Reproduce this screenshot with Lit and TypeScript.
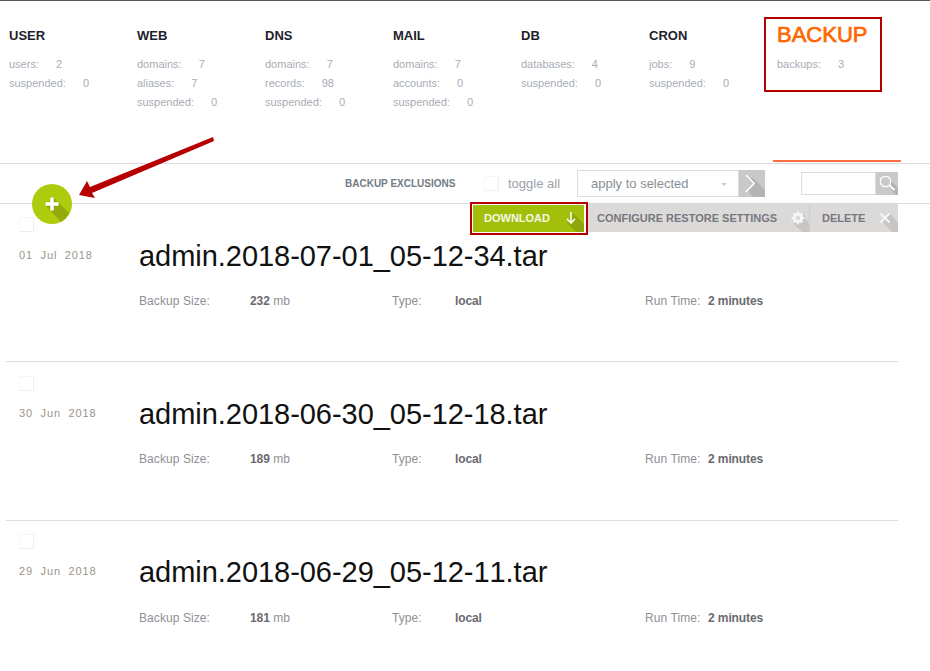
import { LitElement, html, css } from "lit";
import { customElement } from "lit/decorators.js";

const tabs = [
  { t: "USER", r: [["users", "2"], ["suspended", "0"]] },
  { t: "WEB", r: [["domains", "7"], ["aliases", "7"], ["suspended", "0"]] },
  { t: "DNS", r: [["domains", "7"], ["records", "98"], ["suspended", "0"]] },
  { t: "MAIL", r: [["domains", "7"], ["accounts", "0"], ["suspended", "0"]] },
  { t: "DB", r: [["databases", "4"], ["suspended", "0"]] },
  { t: "CRON", r: [["jobs", "9"], ["suspended", "0"]] },
  { t: "BACKUP", r: [["backups", "3"]], active: true },
];
const rows = [
  { d: "01", m: "Jul", y: "2018", name: "admin.2018-07-01_05-12-34.tar", size: "232", actions: true },
  { d: "30", m: "Jun", y: "2018", name: "admin.2018-06-30_05-12-18.tar", size: "189" },
  { d: "29", m: "Jun", y: "2018", name: "admin.2018-06-29_05-12-11.tar", size: "181" },
];

@customElement("app-root")
export class AppRoot extends LitElement {
  static styles = css`
    :host { display: block; width: 930px; height: 671px; overflow: hidden; position: relative; background: #fff; font-family: "Liberation Sans", Arial, sans-serif; color: #555; }
    * { box-sizing: border-box; }
    .nav { height: 164px; border-top: 1px solid #555; border-bottom: 1px solid #ddd; display: flex; padding-left: 9px; }
    .tab { width: 128px; height: 162px; padding-top: 27px; flex: none; }
    .tab h3 { margin: 0 0 11px; font-size: 13px; line-height: 16px; font-weight: 700; color: #1e1e2c; height: 16px; }
    .tab.active h3 { font-size: 22px; color: #ff6600; font-weight: 400; -webkit-text-stroke: 0.7px #ff6600; margin: -1px 0 12px; }
    .stat { font-size: 11px; line-height: 19px; color: #a8adb5; white-space: nowrap; }
    .stat span { margin-left: 17px; }
    .tabline { position: absolute; left: 773px; top: 160px; width: 128px; height: 2px; background: #ff6e42; }
    .toolbar { height: 40px; border-bottom: 1px solid #ddd; display: flex; align-items: center; padding-left: 345px; }
    .excl { font-size: 10px; font-weight: 700; color: #727c87; width: 139px; }
    .cb { width: 15px; height: 15px; border: 1px solid #eee; border-left-color: #f9f9f9; border-top-color: #f5f5f5; border-radius: 1px; flex: none; }
    .toggle { font-size: 13px; color: #9aa0a8; margin-left: 9px; width: 69px; }
    .select { width: 162px; height: 27px; border: 1px solid #ddd; display: flex; align-items: center; padding-left: 13px; font-size: 13px; color: #8a8f96; position: relative; }
    .select i { position: absolute; right: 11px; top: 12px; border: 3px solid transparent; border-top: 3px solid #ccc; }
    .go { width: 26px; height: 27px; background: #c9c9c9; flex: none; display: block; }
    .search { margin-left: 36px; width: 75px; height: 23px; border: 1px solid #ddd; }
    .sbtn { width: 22px; height: 23px; background: #c9c9c9; display: block; flex: none; }
    .row { height: 158px; border-bottom: 1px solid #ddd; margin-left: 6px; padding-left: 13px; width: 892px; }
    .row.r2 { height: 159px; }
    .row.r3 { border-bottom: none; margin-top: -1px; }
    .top { display: flex; height: 29px; align-items: flex-start; }
    .top .cb { margin-top: 14px; }
    .r1 .top .cb { margin-top: 13px; }
    .actions { display: flex; margin-left: auto; height: 29px; margin-top: -1px; }
    .btn { display: flex; align-items: center; height: 29px; font-size: 11px; font-weight: 700; color: #77777f; background: #dcdad8; position: relative; white-space: nowrap; overflow: hidden; }
    .btn svg { position: absolute; right: 0; top: 0; }
    .btn.dl { background: #a2bf0c; color: #f6f8e6; width: 111px; height: 27px; margin: 2px 4px 0 0; padding: 0 0 2px 11px; }
    .btn.cfg { width: 222px; padding-left: 9px; border-right: 1px solid #cfcdcb; }
    .btn.del { width: 88px; padding-left: 12px; }
    .main { display: flex; margin-top: 1px; height: 60px; }
    .date { width: 120px; font-size: 11px; letter-spacing: 0.9px; word-spacing: 3.5px; color: #9c9488; padding-top: 15px; white-space: pre; }
    .name { font-size: 29px; line-height: 44px; color: #111; font-kerning: none; letter-spacing: -0.04px; white-space: nowrap; }
    .meta { display: flex; font-size: 12px; letter-spacing: 0.08px; color: #8f8f95; padding-left: 120px; line-height: 14px; }
    .r3 .meta { margin-top: 1px; }
    .meta b { color: #6a6a70; letter-spacing: -0.1px; }
    .c1 { width: 111px; } .c2 { width: 142px; } .c3 { width: 63px; } .c4 { width: 190px; } .c5 { width: 63px; }
    .fab { position: absolute; left: 32px; top: 184px; width: 40px; height: 40px; display: block; }
    .arrow { position: absolute; left: 78px; top: 136px; display: block; }
    .redbox { position: absolute; border: 2px solid #b60000; pointer-events: none; }
    .rb1 { left: 764px; top: 17px; width: 118px; height: 75px; }
    .rb2 { left: 470px; top: 202px; width: 118px; height: 33px; }
  `;

  render() {
    return html`
      <div class="nav">
        ${tabs.map(
          (t) => html`<div class="tab ${t.active ? "active" : ""}">
            <h3>${t.t}</h3>
            ${t.r.map((r) => html`<div class="stat">${r[0]}:<span>${r[1]}</span></div>`)}
          </div>`
        )}
      </div>
      <div class="tabline"></div>
      <div class="toolbar">
        <div class="excl">BACKUP EXCLUSIONS</div>
        <div class="cb"></div>
        <div class="toggle">toggle all</div>
        <div class="select">apply to selected<i></i></div>
        <svg class="go" viewBox="0 0 26 27">
          <polygon points="8,8 14,14 8,20 14,27 26,27 26,20 14,8" fill="#aaa" opacity=".7"/>
          <polyline points="7,5 15,13.5 7,22" fill="none" stroke="#fff" stroke-width="1.6"/>
        </svg>
        <div class="search"></div>
        <svg class="sbtn" viewBox="0 0 22 23">
          <polygon points="12,14 20,23 22,23 22,16 15,9" fill="#aaa" opacity=".7"/>
          <circle cx="9.5" cy="9.5" r="5.2" fill="none" stroke="#fff" stroke-width="1.3"/>
          <line x1="13.5" y1="13.5" x2="18.5" y2="18" stroke="#fff" stroke-width="2"/>
        </svg>
      </div>
      ${rows.map(
        (r, i) => html`<div class="row r${i + 1}">
          <div class="top">
            <div class="cb"></div>
            ${r.actions
              ? html`<div class="actions">
                  <div class="btn dl">DOWNLOAD
                    <svg width="30" height="27" viewBox="0 0 30 27">
                      <polygon points="13,18 22,27 30,27 30,19 19,8" fill="#8ea80a"/>
                      <path d="M17 7v11M13 13.8l4 4.4 4-4.4" fill="none" stroke="#fff" stroke-width="1.5"/>
                    </svg>
                  </div>
                  <div class="btn cfg">CONFIGURE RESTORE SETTINGS
                    <svg width="30" height="29" viewBox="0 0 30 29">
                      <polygon points="14,20 23,29 30,29 30,21 24,10" fill="#c8c6c4"/>
                      <path d="M19 8.5v13M12.5 15h13M14.6 10.6l8.8 8.8M23.4 10.6l-8.8 8.8" stroke="#f7f7f7" stroke-width="2.2"/>
                      <circle cx="19" cy="15" r="5" fill="#f7f7f7"/>
                      <circle cx="19" cy="15" r="2.3" fill="#dcdad8"/>
                    </svg>
                  </div>
                  <div class="btn del">DELETE
                    <svg width="30" height="29" viewBox="0 0 30 29">
                      <polygon points="14,18 24,29 30,29 30,20 22,10" fill="#c8c6c4"/>
                      <path d="M12.5 10.5l9 9M21.5 10.5l-9 9" stroke="#f7f7f7" stroke-width="1.8"/>
                    </svg>
                  </div>
                </div>`
              : ""}
          </div>
          <div class="main">
            <div class="date">${r.d} ${r.m} ${r.y}</div>
            <div class="name">${r.name}</div>
          </div>
          <div class="meta">
            <div class="c1">Backup Size:</div>
            <div class="c2"><b>${r.size}</b> mb</div>
            <div class="c3">Type:</div>
            <div class="c4"><b>local</b></div>
            <div class="c5">Run Time:</div>
            <div><b>2 minutes</b></div>
          </div>
        </div>`
      )}
      <svg class="fab" viewBox="0 0 40 40">
        <circle cx="20" cy="20" r="20" fill="#aecb0e"/>
        <path d="M22 14 L26 18 L37 29 A20 20 0 0 1 29 37.8 L14 22 Z" fill="#93a90c"/>
        <path d="M20 13.5v13M13.5 20h13" stroke="#fff" stroke-width="3.4"/>
      </svg>
      <svg class="arrow" width="140" height="64" viewBox="0 0 140 64">
        <polygon points="135,1 136,5 14,57 17,62 1,59 9,45 12,51" fill="#b60000"/>
      </svg>
      <div class="redbox rb1"></div>
      <div class="redbox rb2"></div>
    `;
  }
}
